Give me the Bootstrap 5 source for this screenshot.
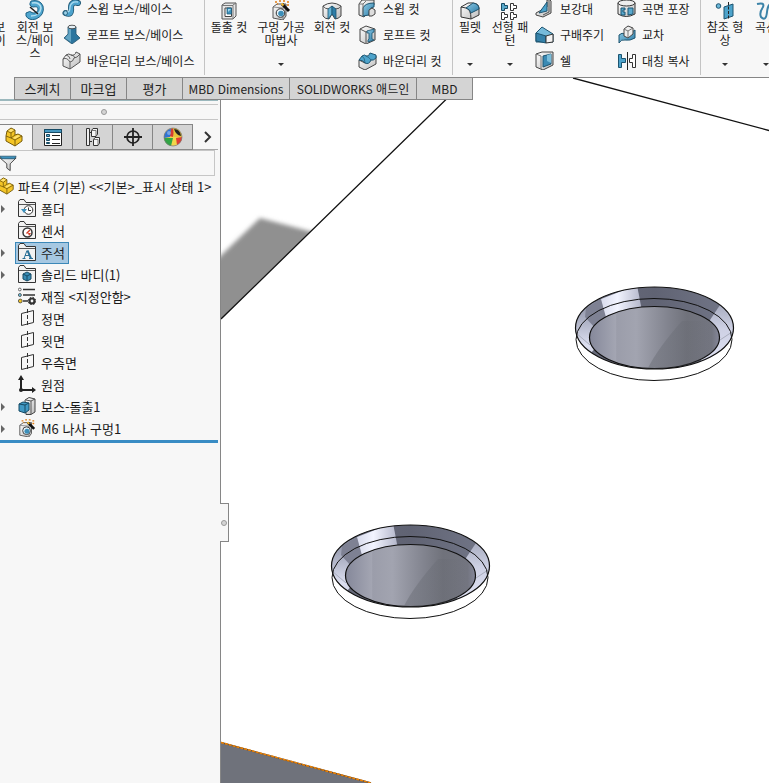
<!DOCTYPE html>
<html lang="ko">
<head>
<meta charset="utf-8">
<meta name="viewport" content="width=device-width, initial-scale=1">
<title>SOLIDWORKS</title>
<link href="https://cdn.jsdelivr.net/npm/bootstrap@5.3.0/dist/css/bootstrap.min.css" rel="stylesheet">
<style>
  body { font: 12px/13px "Noto Sans CJK KR", sans-serif; color: #1a1a1a; background: #f7f7f7; }
  button { font: inherit; color: inherit; background: none; border: 0; padding: 0; }
  svg { display: block; flex: none; }

  /* Command ribbon */
  .ribbon { height: 77px; }
  .ribbon-strip { margin-left: -37px; }
  .cmd { display: flex; flex-direction: column; align-items: center; flex: none; width: 48px; height: 77px; padding: 0 0 11px; white-space: nowrap; }
  .cmd-wide { width: 56px; }
  .cmd-mid { width: 46px; }
  .cmd-slim { width: 34px; }
  .cmd.drop::after { content: ""; margin-top: auto; border: 3px solid transparent; border-top-color: #333; border-bottom: 0; }
  .cmd-list { flex: none; margin-top: -5px; padding-left: 2px; }
  .cmd-list button { display: flex; align-items: center; gap: 5px; height: 26px; white-space: nowrap; }
  .list-a { width: 145px; padding-left: 3px; } .list-b { width: 97px; padding-left: 3px; } .list-c { width: 82px; } .list-d { width: 85px; }
  .rule { flex: none; width: 1px; height: 75px; background: #c4c4c4; }

  /* Ribbon tabs */
  .ribbon-tabs { left: 14px; z-index: 3; border-left: 1px solid #868686; }
  .ribbon-tabs button { height: 23px; width: 56px; background: #d4d4d4; border: 1px solid #868686; border-left: 0; font-size: 13px; color: #222; white-space: nowrap; }
  .ribbon-tabs .tab-latin { font-size: 12px; }
  .ribbon-tabs .tab-dim { width: 107px; } .ribbon-tabs .tab-addin { width: 127px; }

  /* Feature tree pane */
  .pane { flex: none; width: 221px; padding: 22px 2px 0 0; border-right: 1px solid #868686; }
  .pane-top { height: 6px; border-top: 2px solid #9bb8bd; border-bottom: 1px solid #c6c6c6; }
  .pane-grip { height: 15px; padding-right: 10px; border-bottom: 1px solid #c6c6c6; }
  .dot { width: 6px; height: 6px; border: 1px solid #999; border-radius: 50%; background: #d4d4d4; }
  .pane-tabs { height: 30px; padding-top: 4px; }
  .pane-tabs button { display: flex; align-items: center; justify-content: center; width: 40px; height: 26px; background: #d4d4d4; border: 1px solid #868686; border-left: 0; }
  .pane-tabs .current { width: 33px; background: #f7f7f7; border-bottom-color: #f7f7f7; padding-right: 5px; }
  .pane-tabs .more { flex: 1; background: none; border: 0; border-bottom: 1px solid #a8a8a8; padding-left: 4px; }
  .filter-box { height: 26px; margin-right: 3px; border: 1px solid #c6c6c6; border-left: 0; }
  .filter-box input { min-width: 0; border: 0; background: none; outline: 0; }
  .tree { font-size: 13px; }
  .tree button { display: flex; align-items: center; height: 22px; padding: 0 3px 2px 2px; gap: 5px; border: 1px solid transparent; white-space: nowrap; }
  .tree li { display: flex; align-items: center; padding-left: 15px; height: 22px; }
  .tree .open { padding-left: 0; }
  .tree .open::before { content: ""; width: 15px; height: 8px; background: #666; clip-path: polygon(1px 0, 5px 4px, 1px 8px); }
  .tree .root { padding-left: 0; }
  .tree .root button { padding: 0 0 2px; gap: 3px; margin-left: -4px; }
  .tree .selected { background: #a6c8e2; border-color: #3c88b8; }
  .rollback { height: 3px; background: #398cc4; }
  .splitter { left: 220px; top: 426px; width: 9px; height: 39px; z-index: 2; background: #f7f7f7; border: 1px solid #868686; border-left: 0; }

  .view { min-width: 0; background: #fff; border-top: 1px solid #868686; }
</style>
<script src="https://cdn.jsdelivr.net/npm/bootstrap@5.3.0/dist/js/bootstrap.bundle.min.js"></script>
</head>
<body class="d-flex flex-column vh-100 overflow-hidden">

<svg width="0" height="0" class="position-absolute" aria-hidden="true">
  <defs>
    <linearGradient id="blue" x1="0" y1="0" x2="1" y2="1"><stop offset="0" stop-color="#8fcbe6"/><stop offset="1" stop-color="#2b7ba6"/></linearGradient>
    <linearGradient id="grey" x1="0" y1="0" x2="1" y2="1"><stop offset="0" stop-color="#fff"/><stop offset="1" stop-color="#bbb"/></linearGradient>

    <symbol id="i-revolve" viewBox="0 0 20 20"><path d="M6 1 Q15-1 18 6 Q20 15 11 19 Q4 21 1 16 L1 13 Q5 10 8 13 Q13 13 13 9 Q13 6 8 7 Q3 6 6 1Z" fill="#4fa6cf" stroke="#1d6184"/><path d="M7 3 Q15 2 16 8 Q15 16 6 16" fill="none" stroke="#b4dff0" stroke-width="1.500"/><path d="M5 7 L13 14" stroke="#222" stroke-width="1.500"/></symbol>
    <symbol id="i-sweep" viewBox="0 0 20 20"><path d="M3.500 15 Q10 18 9 10 Q9 3 16 5" fill="none" stroke="#1d5470" stroke-width="6" stroke-linecap="round"/><path d="M3.500 15 Q10 18 9 10 Q9 3 16 5" fill="none" stroke="#4da3cd" stroke-width="4.400" stroke-linecap="round"/><path d="M4 14 Q8 15 8 9 Q9 3 16 4" fill="none" stroke="#a8dbf0" stroke-width="1.300"/><ellipse cx="3.500" cy="15" rx="2" ry="2.200" fill="#9bd0e8" stroke="#1d5470" stroke-width=".8"/></symbol>
    <symbol id="i-loft" viewBox="0 0 20 20"><path d="M6 3 V10 L2 14 L10 20 L18 14 L14 10 V3Z" fill="#2d769f" stroke="#23546d" stroke-width=".8"/><path d="M6.500 3 V10 L3 14 L9 18V3Z" fill="#64a5c4"/><ellipse cx="10" cy="3" rx="4" ry="1.800" fill="#e5f1f7" stroke="#333" stroke-width=".8"/></symbol>
    <symbol id="i-bound" viewBox="0 0 20 20"><path d="M1 9 L4 5 Q7 3 9 5 Q13 6 14 2 L18 4 V12 L8 19 L1 16Z" fill="url(#grey)" stroke="#555"/><path d="M1 9 Q5 7 8 12 Q11 12 12 8 Q15 8 18 4 M8 12 V19 M4 5 Q8 6 8 9 M9 5 Q12 5 13 8" fill="none" stroke="#555" stroke-width=".9"/></symbol>
    <symbol id="i-cut" viewBox="0 0 20 20"><path d="M3 5 L6 3 H17 V16 L14 19 H3Z" fill="#e6e6e6" stroke="#555"/><path d="M3 5.500 H14 V19 M14 5 L17 3" fill="none" stroke="#777"/><path d="M6 8 H12.500 V16.500 H6Z" fill="#fff" stroke="#444"/><path d="M8 8 V14 H12.500 V8Z" fill="#3e93bd" stroke="#1f5d7c" stroke-width=".8"/><path d="M9 9 H12 L9 12Z" fill="#a5d8ee"/></symbol>
    <symbol id="i-wizard" viewBox="0 0 20 20"><path d="M2 7 L6 4 H15 V16 L12 20 L2 18Z" fill="url(#grey)" stroke="#555"/><path d="M2 7 L12 8 V19 M12 8 L15 5" fill="none" stroke="#777" stroke-width=".8"/><circle cx="9.500" cy="13" r="4.300" fill="#e5f1f7" stroke="#333"/><circle cx="10" cy="13.500" r="2.800" fill="#3d8fb9"/><path d="M11 4 L18 11" stroke="#111" stroke-width="3"/><path d="M10.500 3.500 L12.500 5.500" stroke="#f3b72b" stroke-width="2"/><path d="M4 2h2M8 1h2M6 4h1M12 1h2M16 2h2M16 5h2" stroke="#e07d14" stroke-width="1.500"/></symbol>
    <symbol id="i-revcut" viewBox="0 0 20 20"><path d="M1 6 Q10 0 19 6 V16 Q16 19 13 19 L10 14 L7 19 Q3 19 1 16Z" fill="url(#grey)" stroke="#444"/><path d="M1 6 Q3 9 7 9 L10 6 L13 9 Q18 9 19 6" fill="none" stroke="#555"/><path d="M6 9 L10 6 V14 L6 19Z" fill="#65b3d5" stroke="#1d5470" stroke-width=".8"/><path d="M10 6 L14 9 V19 L10 14Z" fill="#2d7da7" stroke="#1d5470" stroke-width=".8"/></symbol>
    <symbol id="i-sweepcut" viewBox="0 0 20 20"><path d="M1 6 L4 2 H16 V7 L6 19 L1 17Z" fill="url(#grey)" stroke="#444"/><path d="M5 18 V10 Q7 5 16 5 V9 Q11 9 11 17Z" fill="url(#blue)" stroke="#1d5470"/><path d="M11 12L14 10L17 12V16L14 18H11Z" fill="#ddd" stroke="#444"/><path d="M1 6 H5 L8 3M5 6V17" fill="none" stroke="#777"/></symbol>
    <symbol id="i-loftcut" viewBox="0 0 20 20"><path d="M2 5 L8 2 L17 5 V16 L8 20 L2 17Z" fill="url(#grey)" stroke="#444"/><path d="M2 5 L8 8 V19 M8 8 L10 7" fill="none" stroke="#555"/><path d="M9 7 L16 5 V8 L14 9 V15 L16 16 L10 18 V16 L11 15 V9 L9 9Z" fill="url(#blue)" stroke="#1d5470" stroke-width=".8"/></symbol>
    <symbol id="i-boundcut" viewBox="0 0 20 20"><path d="M1 10 L7 13 L18 6 V14 L7 20 L1 17Z" fill="url(#grey)" stroke="#444"/><path d="M1 10 L4 6 Q7 4 8 6 Q11 7 12 3 L18 5 V8 Q15 11 13 10 Q11 15 7 13 Q5 10 1 10Z" fill="#4da3cb" stroke="#1d5470"/><path d="M4 6 Q7 8 7 13 M8 6 Q11 7 13 10" stroke="#1d5470" fill="none" stroke-width=".7"/></symbol>
    <symbol id="i-fillet" viewBox="0 0 20 20"><path d="M1 7 L8 3 Q19 2 19 8 V15 L11 19 L1 17Z" fill="url(#grey)" stroke="#333"/><path d="M1 7 L6 8 Q11 9 11 19" fill="none" stroke="#333"/><path d="M6 8 L13 3 Q19 4 19 9 L11 13 Q10 9 6 8Z" fill="url(#blue)" stroke="#1d5470"/></symbol>
    <symbol id="i-pattern" viewBox="0 0 20 20"><path d="M1.500 3.500h3v2h3v3h-3v2h-3z" fill="#5aaacb" stroke="#174b65"/><g fill="#fff" stroke="#333"><path d="M10.500 3.500h3v2h3v3h-3v2h-3z"/><path d="M1.500 12.500h3v2h3v3h-3v2h-3z"/><path d="M10.500 12.500h3v2h3v3h-3v2h-3z"/></g></symbol>
    <symbol id="i-rib" viewBox="0 0 20 20"><path d="M12 2 H15 L16 3 V15 L8 19 L1 17 V15 L12 9Z" fill="url(#grey)" stroke="#444"/><path d="M12 4 V13 L4 15Z" fill="#4aa2cc" stroke="#1d5470"/><path d="M14 3 V14 L8 17" fill="none" stroke="#555"/></symbol>
    <symbol id="i-draft" viewBox="0 0 20 20"><path d="M1 9 L7 3 L18 10 V18 H1Z" fill="#76bbdb" stroke="#1d5470"/><path d="M1 9 L11 12 V19 L1 17Z" fill="#3582aa" stroke="#1d5470"/><path d="M11 12 L18 10 V18 L11 19Z" fill="#f3f3f3" stroke="#333"/></symbol>
    <symbol id="i-shell" viewBox="0 0 20 20"><path d="M1 4 L7 2 H18 V15 L8 20 L1 17Z" fill="url(#grey)" stroke="#444"/><path d="M8 6 L16 4 V14 L8 17Z" fill="#3a8ab4" stroke="#1d5470"/><path d="M12 5 L16 4 V13 L12 11Z" fill="#79bddb"/><path d="M1 4 L6 6 V19" fill="none" stroke="#777"/></symbol>
    <symbol id="i-wrap" viewBox="0 0 20 20"><path d="M1 5 V16 Q9 21 18 16 V5" fill="url(#grey)" stroke="#333"/><ellipse cx="9.500" cy="5" rx="8.500" ry="3" fill="#eee" stroke="#333"/><path d="M4 10 H8 V12 H6 V14 H8 V17 H4Z M11 10 H16 V16 L11 17Z" fill="#59a9ce" stroke="#1d5470"/></symbol>
    <symbol id="i-inter" viewBox="0 0 20 20"><path d="M2 11 Q5 8 8 10 Q12 11 18 6 V14 Q13 17 8 16 Q4 15 2 19Z" fill="url(#blue)" stroke="#1d5470"/><path d="M7 5 L11 2 L16 4 V10 L11 14 L7 12Z" fill="#eee" stroke="#444"/><path d="M7 5 L11 7 V13 M11 7 L16 4" fill="none" stroke="#777"/></symbol>
    <symbol id="i-mirror" viewBox="0 0 20 20"><path d="M1.500 4.500H4.500V8.500H8.500V12.500H4.500V17.500H1.500Z" fill="#4da3cb" stroke="#1d5470"/><path d="M18.500 4.500H15.500V8.500H12.500V12.500H15.500V17.500H18.500Z" fill="#fff" stroke="#333"/><path d="M10.500 2V20" stroke="#222"/></symbol>
    <symbol id="i-ref" viewBox="0 0 20 20"><circle cx="3.500" cy="6" r="2.300" fill="#6bb7d8" stroke="#1d5470"/><path d="M9 7 L18 4 V16 L9 19Z" fill="#4da3cb" stroke="#1d5470"/><path d="M13.500 2V20" stroke="#222" stroke-dasharray="3 1.500"/></symbol>
    <symbol id="i-curve" viewBox="0 0 20 20"><path d="M1 4 Q9 2 7 7 Q3 13 5 17 Q10 22 11 12 Q12 2 18 4" fill="none" stroke="#3c83a8" stroke-width="2"/></symbol>

    <symbol id="i-part" viewBox="0 0 20 20"><path d="M2 9 L3 4 L7 1 L11 3 V8 L14 7 L18 9 V14 L11 19 L2 14Z" fill="#f4c526" stroke="#765b0b"/><path d="M7 6 V11 L11 13 V19 M2 9 L7 11 M7 6 L3 4 M7 6 L11 3 M11 13 L18 9 M7 11 L11 8" fill="none" stroke="#765b0b" stroke-width=".9"/><path d="M4 4 L7 2 L10 3 L7 5Z M9 11 L14 8 L16 9 L11 12Z" fill="#ffe477"/></symbol>
    <symbol id="i-props" viewBox="0 0 20 20"><path d="M1.500 2.500H18.500V18.500H1.500Z" fill="#fff" stroke="#222"/><path d="M1.500 2.500H18.500V5.500H1.500Z" fill="#4597c0" stroke="#174b65"/><path d="M3.500 7.500h3v2h-3zM3.500 11.500h3v2h-3zM3.500 15.500h3v1h-3z" fill="#57a8cf" stroke="#174b65"/><path d="M9 8.500H17M9 12.500H17M9 16.500H17" stroke="#222"/></symbol>
    <symbol id="i-config" viewBox="0 0 20 20"><path d="M3.500 1.500H6.500V18.500H3.500ZM6.500 5.500H9M6.500 14.500H9" fill="#eee" stroke="#333"/><path d="M8.500 3.500 L10 1.500 H14.500 V7 L13 9.500 H8.500ZM10.500 12.500 L12 10.500 H16.500 V16 L15 18.500 H10.500Z" fill="#f5f5f5" stroke="#333"/><path d="M9 3.500H13V9M11 12.500H15V18" fill="none" stroke="#777"/></symbol>
    <symbol id="i-target" viewBox="0 0 20 20"><circle cx="10" cy="10" r="6" fill="none" stroke="#222" stroke-width="1.700"/><path d="M10 1V19M1 10H19" stroke="#222" stroke-width="1.800"/></symbol>
    <symbol id="i-ball" viewBox="0 0 20 20"><circle cx="10" cy="10" r="9" fill="#f2d64b"/><path d="M10 10 L6 9 L8 1.500 L12 1Z" fill="#d63b31"/><path d="M7 10 L1 11 A9 9 0 0 1 8 1.500Z" fill="#2f73d4"/><path d="M11 10 L10 1 A9 9 0 0 1 18 6L19 10Z" fill="#e6c33c"/><path d="M11 2 Q17 2 18 9 Q13 8 11 2Z" fill="#222"/><path d="M10 11 L1 11 A9 9 0 0 0 8 19Z" fill="#31a545"/><path d="M13 11 L19 10 A9 9 0 0 1 14 18Z" fill="#df3d35"/><circle cx="10" cy="10" r="9" fill="none" stroke="#777" stroke-width=".7"/><circle cx="6" cy="6" r="2" fill="#fff" opacity=".35"/></symbol>
    <symbol id="i-filter" viewBox="0 0 20 20"><path d="M0 4H19L12 11V19L8 16V11Z" fill="url(#grey)" stroke="#333"/><path d="M0 2H19L17 5H2Z" fill="#3c91bd" stroke="#174b65" stroke-width=".8"/></symbol>
    <symbol id="i-folder" viewBox="0 0 18 18"><path d="M.5 17.500V2.500L2 .5H6L8 3.500H17.500V17.500Z" fill="#f2f2f2" stroke="#333"/><path d="M1 5.500H17" stroke="#555"/></symbol>
    <symbol id="i-history" viewBox="0 0 18 18"><use href="#i-folder"/><circle cx="10.500" cy="11" r="4.300" fill="#fff" stroke="#333"/><path d="M10.500 8.500V11.500H13" stroke="#333" fill="none"/><path d="M3 10L6 14L9 10Z" fill="#3c91bd"/></symbol>
    <symbol id="i-sensor" viewBox="0 0 18 18"><use href="#i-folder"/><circle cx="9.500" cy="11.500" r="4.500" fill="#fff" stroke="#333" stroke-width="1.500"/><path d="M8.500 12.500 L12 9" stroke="#d43b24" stroke-width="1.500"/><path d="M10 12H13L11 15Z" fill="#d43b24"/></symbol>
    <symbol id="i-note" viewBox="0 0 18 18"><use href="#i-folder"/><path d="M9.500 7.500L13 15.500" stroke="#286f96" stroke-width="2"/><path d="M6 15.500L9 7.500M7 12.500H11.500M4.500 15.500H7.500M11 15.500H15" fill="none" stroke="#286f96"/></symbol>
    <symbol id="i-solid" viewBox="0 0 18 18"><use href="#i-folder"/><path d="M5 9 L9 7 L13 9V14L9 16L5 14Z" fill="#398cb5" stroke="#174b65"/><path d="M5 9L9 11L13 9M9 11V16" stroke="#174b65" fill="none"/></symbol>
    <symbol id="i-mat" viewBox="0 0 18 18"><g stroke="#444" stroke-width=".8"><circle cx="1.800" cy="2.500" r="1.400" fill="#fff"/><circle cx="1.900" cy="8" r="1.500" fill="#6dc4e4"/><circle cx="2.300" cy="14" r="1.900" fill="#f3c526"/></g><path d="M5 2.500H17M5 8H17M5 14H10" stroke="#333" stroke-width="1.600"/><circle cx="14" cy="14" r="2.500" fill="none" stroke="#333" stroke-width="2.200"/><circle cx="14" cy="14" r="3.800" fill="none" stroke="#333" stroke-width="1" stroke-dasharray="1.500 1.500"/></symbol>
    <symbol id="i-plane" viewBox="0 0 18 18"><path d="M3.500 4.500L15.500 1.500V13.500L3.500 16.500Z" fill="none" stroke="#333"/><path d="M9.500 0V18" stroke="#333" stroke-dasharray="4 2"/></symbol>
    <symbol id="i-origin" viewBox="0 0 18 18"><path d="M3 3V15H15" fill="none" stroke="#222" stroke-width="2"/><path d="M0 5L3 0L6 5ZM14 12L18 15L14 18Z" fill="#222"/><circle cx="3" cy="15" r="2" fill="#222"/></symbol>
    <symbol id="i-boss" viewBox="0 0 18 18"><path d="M7 3L11 .5L17 2V15L13 17.500H8Z" fill="url(#grey)" stroke="#444"/><path d="M13 4V17M13 4L17 2M8 3L13 4" fill="none" stroke="#555"/><path d="M1 7L5 5L11 6V13L7 16L1 14Z" fill="#4199c4" stroke="#174b65"/><path d="M1 7L7 8L11 6M7 8V16" fill="none" stroke="#174b65"/></symbol>

    <linearGradient id="bore" x1="0" x2="1"><stop offset="0" stop-color="#85889a"/><stop offset=".2" stop-color="#a3a5b2"/><stop offset=".21" stop-color="#9b9daa"/><stop offset=".36" stop-color="#a2a4b0"/><stop offset=".6" stop-color="#82848f"/><stop offset=".75" stop-color="#70727b"/><stop offset=".94" stop-color="#737580"/><stop offset="1" stop-color="#85879a"/></linearGradient>
    <linearGradient id="shade" x1="0" x2="1"><stop offset="0" stop-color="#64676f" stop-opacity=".45"/><stop offset=".5" stop-color="#64676f" stop-opacity=".3"/><stop offset="1" stop-color="#64676f" stop-opacity="0"/></linearGradient>
    <linearGradient id="slope" x1="0" x2="1"><stop offset="0" stop-color="#696c7d"/><stop offset=".5" stop-color="#606373"/><stop offset="1" stop-color="#777b8d"/></linearGradient>
    <linearGradient id="bright" x1="0" x2="1"><stop offset="0" stop-color="#d8dbec"/><stop offset=".4" stop-color="#f2f4ff"/><stop offset="1" stop-color="#b2b5c9"/></linearGradient>
    <linearGradient id="side" x1="0" y1="0" x2="0" y2="1"><stop offset="0" stop-color="#85899c"/><stop offset=".3" stop-color="#a9adc0"/><stop offset=".7" stop-color="#dcdff0"/><stop offset="1" stop-color="#c0c3d4"/></linearGradient>
    <linearGradient id="side2" x1="0" y1="0" x2="0" y2="1"><stop offset="0" stop-color="#a9adc0"/><stop offset=".4" stop-color="#ced1e4"/><stop offset="1" stop-color="#e0e2f4"/></linearGradient>
    <clipPath id="rim"><ellipse cx="94.500" cy="53" rx="79" ry="41"/></clipPath>
    <filter id="soft"><feGaussianBlur stdDeviation="2"/></filter>
    <clipPath id="beyond"><path d="M221 78H468L221 319Z"/></clipPath>
    <g id="hole">
      <ellipse cx="94" cy="64.500" rx="78" ry="41" fill="#fff"/>
      <g clip-path="url(#rim)">
        <path d="M0 0H190V110H0Z" fill="url(#slope)"/>
        <path d="M0 40L26 31L41 24L55 50L25 85L0 90Z" fill="url(#side)"/>
        <path d="M26 33L41 24L48 42L36 54L25 42Z" fill="#7e8193"/>
        <path d="M41 24L77 10L82 36L47 46Z" fill="url(#bright)"/>
        <path d="M160 30L190 45V90H140L148 48Z" fill="url(#side2)"/>
        <path d="M16 58L30 70M160 65L175 55" stroke="#a9adbd"/>
        <ellipse cx="94.500" cy="62.500" rx="65" ry="31" fill="url(#bore)" stroke="#111" stroke-width="1.200"/>
        <path d="M88 93Q98 73 122 46H150V88L95 94Z" fill="url(#shade)"/>
      </g>
      <ellipse cx="94" cy="64.500" rx="78" ry="41" fill="none" stroke="#111"/>
      <ellipse cx="94.500" cy="53" rx="79" ry="41" fill="none" stroke="#111" stroke-width="1.200"/>
    </g>
  </defs>
</svg>

<header class="ribbon overflow-hidden flex-shrink-0">
  <div class="ribbon-strip d-flex">
    <button class="cmd"><svg width="20" height="20"><use href="#i-cut"/></svg>돌출 보<br>스/베이<br>스</button>
    <button class="cmd"><svg width="20" height="20"><use href="#i-revolve"/></svg>회전 보<br>스/베이<br>스</button>
    <div class="cmd-list list-a">
      <button><svg width="20" height="20"><use href="#i-sweep"/></svg>스윕 보스/베이스</button>
      <button><svg width="20" height="20"><use href="#i-loft"/></svg>로프트 보스/베이스</button>
      <button><svg width="20" height="20"><use href="#i-bound"/></svg>바운더리 보스/베이스</button>
    </div>
    <div class="rule"></div>
    <button class="cmd"><svg width="20" height="20"><use href="#i-cut"/></svg>돌출 컷</button>
    <button class="cmd cmd-wide drop"><svg width="20" height="20"><use href="#i-wizard"/></svg>구멍 가공<br>마법사</button>
    <button class="cmd cmd-mid"><svg width="20" height="20"><use href="#i-revcut"/></svg>회전 컷</button>
    <div class="cmd-list list-b">
      <button><svg width="20" height="20"><use href="#i-sweepcut"/></svg>스윕 컷</button>
      <button><svg width="20" height="20"><use href="#i-loftcut"/></svg>로프트 컷</button>
      <button><svg width="20" height="20"><use href="#i-boundcut"/></svg>바운더리 컷</button>
    </div>
    <div class="rule"></div>
    <button class="cmd cmd-slim drop"><svg width="20" height="20"><use href="#i-fillet"/></svg>필렛</button>
    <button class="cmd cmd-mid drop"><svg width="20" height="20"><use href="#i-pattern"/></svg>선형 패<br>턴</button>
    <div class="cmd-list list-c">
      <button><svg width="20" height="20"><use href="#i-rib"/></svg>보강대</button>
      <button><svg width="20" height="20"><use href="#i-draft"/></svg>구배주기</button>
      <button><svg width="20" height="20"><use href="#i-shell"/></svg>쉘</button>
    </div>
    <div class="cmd-list list-d">
      <button><svg width="20" height="20"><use href="#i-wrap"/></svg>곡면 포장</button>
      <button><svg width="20" height="20"><use href="#i-inter"/></svg>교차</button>
      <button><svg width="20" height="20"><use href="#i-mirror"/></svg>대칭 복사</button>
    </div>
    <div class="rule"></div>
    <button class="cmd drop"><svg width="20" height="20"><use href="#i-ref"/></svg>참조 형<br>상</button>
    <button class="cmd cmd-slim drop"><svg width="20" height="20"><use href="#i-curve"/></svg>곡선</button>
  </div>
</header>

<main class="d-flex flex-grow-1 position-relative overflow-hidden">
  <nav class="ribbon-tabs position-absolute top-0 d-flex" aria-label="리본 탭">
    <button>스케치</button><button>마크업</button><button>평가</button><button class="tab-latin tab-dim">MBD Dimensions</button><button class="tab-latin tab-addin">SOLIDWORKS 애드인</button><button class="tab-latin">MBD</button>
  </nav>

  <aside class="pane">
    <div class="pane-top"></div>
    <div class="pane-grip d-flex justify-content-center align-items-center"><span class="dot"></span></div>
    <div class="pane-tabs d-flex">
      <button class="current" aria-label="디자인 트리"><svg width="20" height="20"><use href="#i-part"/></svg></button>
      <button aria-label="속성"><svg width="20" height="20"><use href="#i-props"/></svg></button>
      <button aria-label="설정"><svg width="20" height="20"><use href="#i-config"/></svg></button>
      <button aria-label="치수"><svg width="20" height="20"><use href="#i-target"/></svg></button>
      <button aria-label="표시"><svg width="20" height="20"><use href="#i-ball"/></svg></button>
      <button class="more" aria-label="더 보기"><svg width="10" height="12" viewBox="0 0 10 12"><path d="M2 1L7 6L2 11" fill="none" stroke="#333" stroke-width="2"/></svg></button>
    </div>
    <div class="filter-box d-flex align-items-center">
      <label for="treeFilter" aria-label="필터"><svg width="17" height="18"><use href="#i-filter"/></svg></label>
      <input id="treeFilter" type="text" class="flex-grow-1">
    </div>
    <ul class="tree list-unstyled m-0">
      <li class="root"><button><svg width="18" height="18"><use href="#i-part"/></svg>파트4 (기본) &lt;&lt;기본&gt;_표시 상태 1&gt;</button></li>
      <li class="open"><button><svg width="18" height="18"><use href="#i-history"/></svg>폴더</button></li>
      <li><button><svg width="18" height="18"><use href="#i-sensor"/></svg>센서</button></li>
      <li class="open"><button class="selected"><svg width="18" height="18"><use href="#i-note"/></svg>주석</button></li>
      <li class="open"><button><svg width="18" height="18"><use href="#i-solid"/></svg>솔리드 바디(1)</button></li>
      <li><button><svg width="18" height="18"><use href="#i-mat"/></svg>재질 &lt;지정안함&gt;</button></li>
      <li><button><svg width="18" height="18"><use href="#i-plane"/></svg>정면</button></li>
      <li><button><svg width="18" height="18"><use href="#i-plane"/></svg>윗면</button></li>
      <li><button><svg width="18" height="18"><use href="#i-plane"/></svg>우측면</button></li>
      <li><button><svg width="18" height="18"><use href="#i-origin"/></svg>원점</button></li>
      <li class="open"><button><svg width="18" height="18"><use href="#i-boss"/></svg>보스-돌출1</button></li>
      <li class="open"><button><svg width="18" height="18"><use href="#i-wizard"/></svg>M6 나사 구멍1</button></li>
    </ul>
    <div class="rollback"></div>
  </aside>
  <button class="splitter position-absolute d-flex align-items-center justify-content-center" aria-label="패널 접기"><span class="dot"></span></button>

  <section class="view flex-grow-1">
    <svg width="100%" height="100%" viewBox="221 78 548 705" preserveAspectRatio="xMinYMin slice" role="img" aria-label="모델 보기">
      <g clip-path="url(#beyond)"><path d="M210 266L260 218L320 234L320 330H210Z" fill="#909090" filter="url(#soft)"/></g>
      <path d="M221 319L468 78M573 78L769 130.500" stroke="#111" stroke-width="1.300" fill="none"/>
      <use href="#hole" x="560" y="275"/>
      <use href="#hole" x="316" y="513"/>
      <path d="M221 743L371 783H221Z" fill="#6f727b"/>
      <path d="M221 742.500L371 783" stroke="#5f4a38" stroke-width="1.500"/>
      <path d="M221 742.500L371 783" stroke="#ef8200" stroke-width="1.500" stroke-dasharray="3 1"/>
    </svg>
  </section>
</main>
</body>
</html>
